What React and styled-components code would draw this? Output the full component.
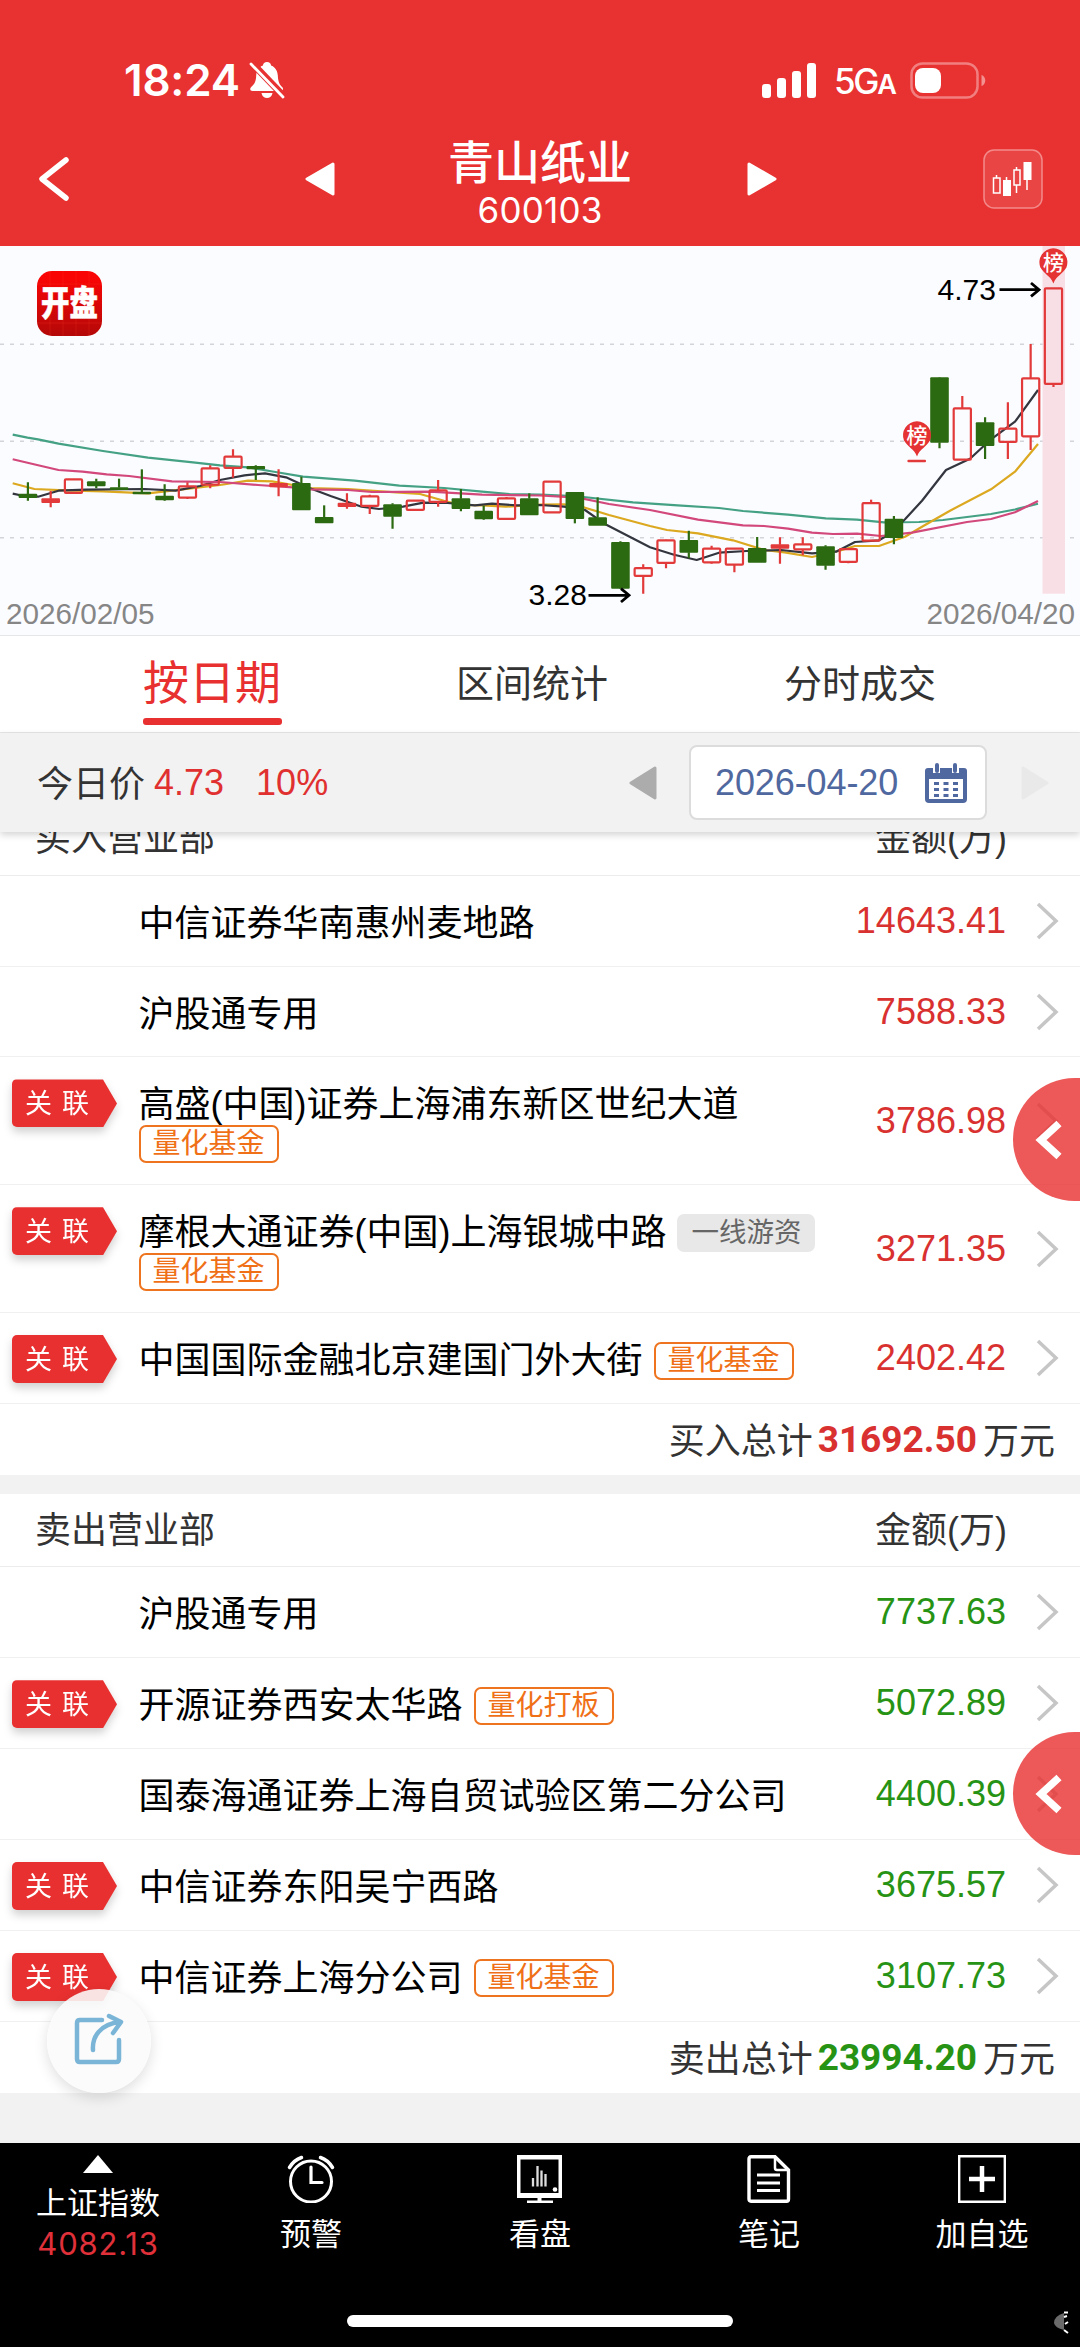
import React from "react";
import styled, { createGlobalStyle } from "styled-components";

const GlobalStyle = createGlobalStyle`
  * {
    box-sizing: border-box;
  }

  body {
    margin: 0;
    background: #f2f2f2;
    font-family: "Liberation Sans", "Noto Sans CJK SC", sans-serif;
  }

  button {
    padding: 0;
    border: 0;
    background: none;
    color: inherit;
    font: inherit;
  }

  svg {
    display: block;
  }
`;

const Page = styled.div`
  position: relative;
  display: flex;
  flex-direction: column;
  width: 1080px;
  height: 2347px;
  overflow: hidden;
  background: #f2f2f2;
`;

const Header = styled.header`
  height: 246px;
  flex: none;
  background: #e83131;
  color: #fff;
`;

const StatusBar = styled.div`
  display: flex;
  align-items: center;
  height: 136px;
  padding: 24px 94px 0 124px;
`;

const Clock = styled.span`
  width: 125px;
  font: 600 44px/1 Inter, sans-serif;
  letter-spacing: -0.2px;
  white-space: nowrap;
`;

const StatusRight = styled.div`
  display: flex;
  align-items: center;
  margin-left: auto;
`;

const Network = styled.span`
  width: 76px;
  padding: 2px 0 0 17px;
  font: 500 35px/1 Inter, sans-serif;
  letter-spacing: -2.3px;
  box-sizing: content-box;

  small {
    font-size: 27px;
    font-weight: 600;
  }
`;

const NavBar = styled.div`
  display: grid;
  grid-template-columns: 250px 1fr 250px;
  align-items: center;
  height: 86px;
`;

const NavSide = styled.div`
  display: flex;
  align-items: center;
  justify-content: space-between;
  padding: ${(props) => (props.$right ? "0 0 0 7px" : "0 0 0 36px")};
  width: ${(props) => (props.$right ? "303px" : "335px")};
  margin-bottom: 15px;
  ${(props) => props.$right && "margin-left: -90px;"}
`;

const StockTitle = styled.div`
  display: flex;
  flex-direction: column;
  align-items: center;
  margin-bottom: 8px;
`;

const StockName = styled.h1`
  margin: 0;
  font: 500 46px/55px "Liberation Sans", "Noto Sans CJK SC", sans-serif;
`;

const StockCode = styled.span`
  margin-top: 1px;
  font: 400 35px/36px Inter, sans-serif;
  letter-spacing: 0.2px;
`;

const ChartPanel = styled.section`
  height: 390px;
  flex: none;
  background: #fbfcff;
  border-bottom: 1px solid #e4e6e8;
`;

const Tabs = styled.nav`
  display: grid;
  grid-template-columns: 424px 216px 440px;
  height: 97px;
  flex: none;
  background: #fff;
  border-bottom: 1px solid #e6e6e6;
`;

const Tab = styled.button`
  display: flex;
  flex-direction: column;
  align-items: center;
  padding-top: ${(props) => (props.$active ? "12px" : "11px")};
  color: ${(props) => (props.$active ? "#e83030" : "#333")};
  font-size: ${(props) => (props.$active ? "46px" : "38px")};
  line-height: ${(props) => (props.$active ? "70px" : "74px")};
  white-space: nowrap;

  &::after {
    content: "";
    display: ${(props) => (props.$active ? "block" : "none")};
    width: 139px;
    height: 7px;
    border-radius: 3px;
    background: #e83030;
  }
`;

const PriceBar = styled.div`
  position: relative;
  z-index: 1;
  display: flex;
  align-items: center;
  height: 99px;
  padding: 0 31px 0 37px;
  flex: none;
  background: #f2f2f2;
  box-shadow: 0 3px 7px rgba(0, 0, 0, 0.17);
  font-size: 36px;
  color: #333;
`;

const PriceLabel = styled.span`
  padding-bottom: 3px;
`;

const Price = styled.span`
  margin-left: ${(props) => props.$gap}px;
  color: #e03030;
`;

const DatePicker = styled.div`
  display: flex;
  align-items: center;
  margin-left: auto;
`;

const DateBox = styled.button`
  display: flex;
  align-items: center;
  justify-content: space-between;
  width: 298px;
  height: 75px;
  margin: 0 34px 0 32px;
  padding: 0 18px 0 24px;
  border: 2px solid #dcdcdc;
  border-radius: 8px;
  background: #fff;
  color: #5068a0;
  letter-spacing: -0.1px;
`;

const Board = styled.section`
  flex: none;
  margin-top: ${(props) => props.$offset}px;
  background: #fff;
`;

const BoardHead = styled.div`
  display: flex;
  align-items: center;
  justify-content: space-between;
  height: 73px;
  padding: 0 73px 7px 35px;
  border-bottom: 1px solid #ececec;
  color: #333;
  font-size: 36px;
`;

const SeatRow = styled.div`
  display: flex;
  height: ${(props) => (props.$tall ? 127.8 : 90.9)}px;
  padding-left: 12px;
  border-bottom: 1px solid #f0f0f0;
`;

const LinkSlot = styled.div`
  width: 126.5px;
  padding-top: 22px;
  flex: none;
`;

const LinkBadge = styled.div`
  width: 105px;
  filter: drop-shadow(0 5px 4px rgba(0, 0, 0, 0.18));

  span {
    display: block;
    height: 48px;
    padding-left: 13px;
    border-radius: 5px;
    background: #e83030;
    clip-path: polygon(0 0, 91px 0, 105px 50%, 91px 100%, 0 100%);
    color: #fff;
    font-size: 27px;
    line-height: 50px;
    letter-spacing: 10px;
    white-space: nowrap;
  }
`;

const Seat = styled.div`
  display: flex;
  flex-wrap: wrap;
  align-content: flex-start;
  align-items: center;
  flex: 1;
  padding-top: 26px;
  color: #000;
  font-size: 36px;
  line-height: 43px;
  white-space: nowrap;
`;

const Tag = styled.span`
  height: 38px;
  margin-left: ${(props) => (props.$newLine ? 0 : 11)}px;
  margin-top: ${(props) => (props.$newLine ? -1 : 0)}px;
  padding: 0 12px;
  border: 2px solid ${(props) => (props.$grey ? "#e8e8e8" : "#ee7420")};
  border-radius: 7px;
  background: ${(props) => (props.$grey ? "#e8e8e8" : "#fff")};
  color: ${(props) => (props.$grey ? "#666" : "#f07018")};
  font-size: ${(props) => (props.$grey ? 27.5 : 28)}px;
  line-height: 34px;
`;

const LineBreak = styled.i`
  width: 100%;
`;

const Amount = styled.span`
  align-self: center;
  width: 160px;
  color: ${(props) => props.$color};
  font-size: 36px;
  text-align: right;
`;

const Arrow = styled.span`
  align-self: center;
  width: 74px;
  padding-left: 30px;
`;

const Total = styled.div`
  display: flex;
  align-items: center;
  justify-content: flex-end;
  height: 71px;
  padding: 0 25px 2px 0;
  color: #333;
  font-size: 36px;

  b {
    margin: 3px 6px 0 5px;
    color: ${(props) => props.$color};
    font: 700 37px/1 Roboto, sans-serif;
  }
`;

const BottomBar = styled.footer`
  position: relative;
  display: flex;
  flex-direction: column;
  align-items: center;
  justify-content: space-between;
  height: 204px;
  margin-top: auto;
  padding-bottom: 20px;
  flex: none;
  background: #000;
  color: #fff;
`;

const BottomItems = styled.div`
  display: grid;
  grid-template-columns: 196px 230px 228px 230px 196px;
  width: 100%;
`;

const BottomItem = styled.button`
  display: flex;
  flex-direction: column;
  align-items: center;
  padding-top: 12px;
  font-size: 31px;
  line-height: 40px;
  white-space: nowrap;

  span {
    margin-top: 12px;
  }
`;

const IndexName = styled.div`
  margin-top: 11px;
`;

const IndexValue = styled.div`
  color: #e0303a;
  font: 400 31px/40px Inter, sans-serif;
  letter-spacing: 0.8px;
`;

const HomeIndicator = styled.div`
  width: 386px;
  height: 12px;
  border-radius: 6px;
  background: #fff;
`;

const CornerMark = styled.div`
  position: absolute;
  right: 10px;
  bottom: 12px;
`;

const SideHandle = styled.button`
  position: absolute;
  z-index: 2;
  right: 0;
  top: ${(props) => props.$top}px;
  display: flex;
  align-items: center;
  width: 67px;
  height: 123px;
  padding-left: 22px;
  border-radius: 62px 0 0 62px;
  background: rgba(232, 48, 48, 0.8);
`;

const ShareButton = styled.button`
  position: absolute;
  z-index: 2;
  left: 47px;
  top: 1989px;
  display: flex;
  align-items: center;
  justify-content: center;
  width: 104px;
  height: 104px;
  padding-bottom: 4px;
  border-radius: 50%;
  background: rgba(251, 251, 251, 0.88);
  box-shadow: 0 5px 14px rgba(0, 0, 0, 0.13);
`;

const RED = "#e23a3a";
const GREEN = "#2c6a12";

// [direction, high, body top, body bottom, low] in thirds of a pixel
const candles = [
  ["g", 727, 762, 773, 782],
  ["d", 753, 776, 788, 802],
  ["r", 718, 719, 758, 762],
  ["g", 716, 725, 738, 745],
  ["g", 716, 743, 749, 749],
  ["g", 688, 756, 762, 762],
  ["g", 733, 768, 780, 782],
  ["r", 727, 740, 772, 777],
  ["r", 676, 686, 733, 745],
  ["r", 628, 651, 683, 713],
  ["g", 676, 679, 687, 720],
  ["d", 688, 730, 741, 769],
  ["g", 710, 730, 810, 810],
  ["g", 796, 832, 849, 849],
  ["d", 760, 789, 800, 806],
  ["r", 764, 770, 797, 822],
  ["g", 790, 794, 829, 866],
  ["r", 780, 783, 809, 811],
  ["r", 720, 752, 785, 800],
  ["g", 747, 776, 806, 814],
  ["g", 797, 813, 837, 839],
  ["r", 771, 776, 836, 838],
  ["g", 760, 776, 825, 825],
  ["r", 725, 726, 816, 818],
  ["g", 757, 757, 836, 850],
  ["g", 772, 833, 856, 856],
  ["g", 904, 907, 1045, 1047],
  ["r", 973, 985, 1007, 1061],
  ["r", 899, 902, 968, 985],
  ["g", 872, 901, 937, 955],
  ["r", 917, 927, 966, 971],
  ["r", 925, 927, 973, 997],
  ["g", 891, 925, 967, 967],
  ["d", 892, 914, 925, 971],
  ["r", 892, 914, 927, 946],
  ["g", 916, 920, 976, 989],
  ["r", 925, 928, 965, 970],
  ["r", 779, 790, 901, 901],
  ["g", 828, 837, 893, 913],
  ["d", 660, 660, 666, 666],
  ["g", 412, 413, 607, 625],
  ["r", 468, 506, 658, 658],
  ["g", 532, 548, 617, 657],
  ["r", 487, 567, 605, 657],
  ["r", 312, 416, 588, 630],
  ["r", 146, 146, 431, 441],
];

const averages = [
  {
    color: "#45a184",
    points:
      "12.7,188.7 27.5,191.7 38,193.3 58.5,197.7 103,205 148,211.7 193,216.3 220,219.3 248,221.3 275.5,226 303,230.7 354.7,234.7 399.4,239.7 444,242 482,245.7 509.6,248 540,248.5 574,250 633,256.3 677.7,259.3 719,262 743,265 788,268.7 825.8,272.3 856.8,273.7 884,276.3 919,276 943,274 991,268 1015,263.5 1038,257.7",
  },
  {
    color: "#dba820",
    points:
      "12.7,237.3 34.4,243 65.4,244.3 103,245.3 148,247.3 182.5,243.3 220,239 248,234.7 272,235.3 310,242 348,243 396,246.3 420,248 444,254.7 461,259 482,259.3 506,260.7 540,258.5 564,258.3 585,261.7 609,269 650,280 667,284 698,287.3 733,294.3 764,304 784.5,306.3 812,311 839.6,304.7 855,300 879,300 905,290.7 922,280.7 950,264.7 991,243.3 1015,225.7 1038,198",
  },
  {
    color: "#33363f",
    points:
      "12.7,247.7 24,250 38,250.7 58.5,244.7 86,243.7 144.6,243 175.6,244.7 200,240 220,234 244.5,229.3 265,227.3 286,231.3 310,242.3 330.6,250 361.6,260.7 379,263 403,260.7 423.5,256.7 447.7,257 475,259.3 492,257.7 516.5,259.3 540,259 564,260.7 585,264 605.4,278.3 650,301.3 674,308.7 696.7,314 719,306.7 746.6,305 781,304 812,307.3 836,305.7 855,296 879,294.3 891,287.3 905,273.3 922,254.7 946,224 970,212.7 991,193.3 1015,175.7 1038,144",
  },
  {
    color: "#d2487a",
    points:
      "12.7,213.3 36,218.7 58.5,224 82.6,225.7 106.7,228.3 129,230 172,235.3 220,236 258,239 293,241.3 310,243.3 348,244 372,246 430,245.7 482,248.7 540,249.5 578,251.7 609,258 650,264 698,273.7 743,279.3 764,280 788,282.7 812,286.7 833,288 857,287.7 881,290 912,286.7 967,276 991,273 1015,266.3 1038,255",
  },
];

const buySeats = [
  { name: "中信证券华南惠州麦地路", amount: "14643.41" },
  { name: "沪股通专用", amount: "7588.33" },
  {
    name: "高盛(中国)证券上海浦东新区世纪大道",
    amount: "3786.98",
    linked: true,
    below: "量化基金",
  },
  {
    name: "摩根大通证券(中国)上海银城中路",
    amount: "3271.35",
    linked: true,
    trader: "一线游资",
    below: "量化基金",
  },
  {
    name: "中国国际金融北京建国门外大街",
    amount: "2402.42",
    linked: true,
    tag: "量化基金",
  },
];

const sellSeats = [
  { name: "沪股通专用", amount: "7737.63" },
  { name: "开源证券西安太华路", amount: "5072.89", linked: true, tag: "量化打板" },
  { name: "国泰海通证券上海自贸试验区第二分公司", amount: "4400.39" },
  { name: "中信证券东阳吴宁西路", amount: "3675.57", linked: true },
  { name: "中信证券上海分公司", amount: "3107.73", linked: true, tag: "量化基金" },
];

function Candle({ data, index }) {
  const [type, high, top, bottom, low] = data;
  const x = 27.9 + index * 22.79;
  const y = (v) => v / 3 - 6;
  const color = type === "g" ? GREEN : RED;
  const filled = type !== "r";
  const inset = filled ? 0 : 0.7;

  return (
    <g>
      <path
        d={`M${x} ${y(high)}V${y(top)}M${x} ${y(bottom)}V${y(low)}`}
        stroke={color}
        strokeWidth="2.2"
      />
      <rect
        x={x - 9.3 + inset}
        y={y(top) - 0.3}
        width={18.6 - inset * 2}
        height={Math.max(y(bottom) - y(top), 1.5) + 0.6}
        rx="1"
        fill={filled ? color : "none"}
        stroke={filled ? "none" : color}
        strokeWidth="2.2"
      />
    </g>
  );
}

function Pin({ x, y }) {
  return (
    <g>
      <path
        d={`M${x - 13} ${y + 5}A14 14 0 1 1 ${x + 13} ${y + 5}C${x + 9} ${y + 12} ${x + 3} ${y + 13} ${x} ${y + 21}C${x - 3} ${y + 13} ${x - 9} ${y + 12} ${x - 13} ${y + 5}Z`}
        fill="#e53232"
      />
      <text
        x={x}
        y={y + 7.5}
        fill="#fff"
        fontSize="21"
        fontWeight="500"
        textAnchor="middle"
      >
        榜
      </text>
    </g>
  );
}

function KLineChart() {
  return (
    <svg width="1080" height="389" viewBox="0 0 1080 389" fill="none">
      <defs>
        <linearGradient id="logo" x1="0" y1="0" x2="0" y2="1">
          <stop offset="0.1" stopColor="#fa0505" />
          <stop offset="1" stopColor="#b40808" />
        </linearGradient>
      </defs>
      <path
        d="M0 98.3H1080M0 195.3H1080M0 291.7H1080"
        stroke="#d3d4da"
        strokeWidth="1.5"
        strokeDasharray="4 6"
      />
      <rect x="1042.5" y="0" width="22.5" height="347.7" fill="#f8dfe5" />

      <rect x="37" y="25" width="65" height="65" rx="15" fill="url(#logo)" />
      <path
        d="M37 77H102M37 38H102M50 25V90M63 25V90M76 25V90M89 25V90"
        stroke="#ff5030"
        strokeOpacity="0.18"
      />
      <text
        transform="translate(69.5 70.3) scale(1 1.22)"
        fill="#fff"
        fontSize="28.5"
        fontWeight="900"
        stroke="#fff"
        strokeWidth="0.4"
        textAnchor="middle"
        fontFamily="Noto Sans CJK SC"
      >
        开盘
      </text>

      {averages.map((line) => (
        <polyline
          key={line.color}
          points={line.points}
          stroke={line.color}
          strokeWidth="2.2"
          strokeLinejoin="round"
        />
      ))}
      {candles.map((data, i) => (
        <Candle key={i} data={data} index={i} />
      ))}
      <Pin x={917} y={189.5} />
      <Pin x={1053.4} y={16.5} />

      <g fill="#000" fontSize="30">
        <text x="937.5" y="53.5">4.73</text>
        <text x="528.5" y="359">3.28</text>
      </g>
      <g stroke="#000" strokeWidth="2.8">
        <path d="M999.5 43.7H1038M1031 37L1039 43.7L1031 50.4" />
        <path d="M588.5 349.3H628M621 342.6L629 349.3L621 356" />
      </g>
      <g fill="#868686" fontSize="29.7">
        <text x="6" y="378">2026/02/05</text>
        <text x="1075" y="378" textAnchor="end">2026/04/20</text>
      </g>
    </svg>
  );
}

function MutedBell() {
  return (
    <svg width="36" height="38" viewBox="0 0 36 38" fill="#fff">
      <path d="M18 1c2.3 0 4 1.5 4 3.5 4 1.3 6.5 5.2 6.8 10 .3 6.5 2 9.5 4.4 11.5 1.5 1.4 1 4-1.4 4H3.6C1 30 .5 27.5 2.2 26c3-2.7 4.8-5 5-11.5.2-4.8 2.8-8.7 6.8-10C14 2.5 15.7 1 18 1Z" />
      <path d="M12.5 32h11c-.6 3.3-2.7 5-5.5 5s-4.9-1.7-5.5-5Z" />
      <path d="M2 1L36 36.5" stroke="#e83131" strokeWidth="7" />
      <path d="M2 3L34 36" stroke="#fff" strokeWidth="2.8" strokeLinecap="round" />
    </svg>
  );
}

function Signal() {
  return (
    <svg width="55" height="35" viewBox="0 0 55 35" fill="#fff">
      <rect x="0" y="21" width="9" height="14" rx="3" />
      <rect x="15" y="15" width="9" height="20" rx="3" />
      <rect x="30" y="8" width="9" height="27" rx="3" />
      <rect x="45" y="0" width="9" height="35" rx="3" />
    </svg>
  );
}

function Battery() {
  return (
    <svg width="76" height="37" viewBox="0 0 76 37" fill="none">
      <rect
        x="1.5"
        y="1.5"
        width="66"
        height="34"
        rx="11"
        stroke="#f27f7f"
        strokeWidth="2.5"
      />
      <rect x="5" y="6" width="26" height="25" rx="8" fill="#fff" />
      <path d="M71.5 13c5 1.5 5 9.5 0 11Z" fill="#f39090" />
    </svg>
  );
}

function Triangle({ width, height, color, right }) {
  const d = right
    ? `M2 2L${width - 2} ${height / 2}L2 ${height - 2}Z`
    : `M${width - 2} 2L2 ${height / 2}L${width - 2} ${height - 2}Z`;
  return (
    <svg width={width} height={height}>
      <path d={d} fill={color} stroke={color} strokeWidth="3" strokeLinejoin="round" />
    </svg>
  );
}

function CandleButton() {
  return (
    <svg width="60" height="60" viewBox="0 0 60 60" fill="none" stroke="#fff">
      <rect
        x="1"
        y="1"
        width="58"
        height="58"
        rx="10"
        fill="#ea4545"
        stroke="#f38a8a"
        strokeWidth="1.5"
      />
      <g strokeWidth="1.5">
        <path d="M13.5 26V29M33.5 18V21M33.5 36V44M23.5 28V32M44 31V41" />
        <rect x="10.5" y="29" width="6.5" height="15" />
        <rect x="31" y="21" width="6" height="15" />
      </g>
      <path d="M20 31H28V47H20ZM40.5 13H48.5V31H40.5Z" fill="#fff" stroke="none" />
    </svg>
  );
}

function CalendarIcon() {
  return (
    <svg width="42" height="40" viewBox="0 0 42 40" fill="#5068a0">
      <path d="M3 5H39Q42 5 42 8V36Q42 40 38 40H4Q0 40 0 36V8Q0 5 3 5Z" />
      <path d="M4 16H38V36H4Z" fill="#fff" />
      <path d="M8 3H15V10H8ZM27 3H34V10H27Z" fill="#fff" />
      <rect x="10" y="0" width="4" height="10" rx="2" />
      <rect x="28" y="0" width="4" height="10" rx="2" />
      <path d="M9 19h5v3h-5zM18.5 19h5v3h-5zM28 19h5v3h-5zM9 25h5v3h-5zM18.5 25h5v3h-5zM28 25h5v3h-5zM9 31h5v3h-5zM18.5 31h5v3h-5zM28 31h5v3h-5z" />
    </svg>
  );
}

function Chevron() {
  return (
    <svg width="24" height="40" viewBox="0 0 24 40" fill="none">
      <path d="M2 3L20 20L2 37" stroke="#c6c6c6" strokeWidth="3.5" />
    </svg>
  );
}

function AlarmIcon() {
  return (
    <svg width="48" height="48" viewBox="0 0 48 48" fill="none" stroke="#fff">
      <circle cx="24" cy="26.5" r="20.5" strokeWidth="3" />
      <path d="M24 12V27.5H35" strokeWidth="3.2" strokeLinecap="round" />
      <path
        d="M2.5 12.5Q7 5 14.5 2.5M45.5 12.5Q41 5 33.5 2.5"
        strokeWidth="3.5"
        strokeLinecap="round"
      />
    </svg>
  );
}

function MonitorIcon() {
  return (
    <svg width="48" height="48" viewBox="0 0 48 48" fill="#fff">
      <path fillRule="evenodd" d="M1 0H46V43H1ZM4.5 4.5V38H42.5V4.5Z" />
      <path d="M21.5 42H25.5V46H21.5ZM11 45.5H37V48H11Z" />
      <path
        d="M17 23V31.5M21.5 11V31.5M25.5 15.5V31.5M29.5 19V31.5"
        stroke="#ddd"
        strokeWidth="2.3"
      />
      <circle cx="39" cy="34.5" r="2.3" />
    </svg>
  );
}

function NoteIcon() {
  return (
    <svg width="44" height="48" viewBox="0 0 44 48" fill="none" stroke="#fff">
      <path
        d="M4 1.7H28L41.5 15V44Q41.5 46.3 39.5 46.3H4Q2 46.3 2 44V4Q2 1.7 4 1.7Z"
        strokeWidth="3.4"
      />
      <path d="M28 2V13Q28 15 30 15H41" strokeWidth="2.5" />
      <path d="M10 20H33M10 28H33M10 35.5H33" strokeWidth="2.8" />
    </svg>
  );
}

function AddIcon() {
  return (
    <svg width="48" height="48" viewBox="0 0 48 48" fill="none" stroke="#fff">
      <path d="M1.2 1.2H46.8V46.8H1.2Z" strokeWidth="2.4" />
      <path d="M24 11V37M11 24H37" strokeWidth="4.5" />
    </svg>
  );
}

function ShareIcon() {
  return (
    <svg
      width="50"
      height="52"
      viewBox="0 0 50 52"
      fill="none"
      stroke="#7ab4d6"
      strokeWidth="4.5"
      strokeLinecap="round"
      strokeLinejoin="round"
    >
      <path d="M28 7H6Q3 7 3 10V46Q3 49 6 49H42Q45 49 45 46V27" />
      <path d="M19 37C18 24 26 11 46 9M35 3L47 9L39 20" />
    </svg>
  );
}

function SeatItem({ seat, color }) {
  return (
    <SeatRow $tall={Boolean(seat.below)}>
      <LinkSlot>
        {seat.linked && (
          <LinkBadge>
            <span>关联</span>
          </LinkBadge>
        )}
      </LinkSlot>
      <Seat>
        {seat.name}
        {seat.trader && <Tag $grey>{seat.trader}</Tag>}
        {seat.tag && <Tag>{seat.tag}</Tag>}
        {seat.below && <LineBreak />}
        {seat.below && <Tag $newLine>{seat.below}</Tag>}
      </Seat>
      <Amount $color={color}>{seat.amount}</Amount>
      <Arrow>
        <Chevron />
      </Arrow>
    </SeatRow>
  );
}

function SeatBoard({ title, totalLabel, total, seats, color, offset }) {
  return (
    <Board $offset={offset}>
      <BoardHead>
        <span>{title}</span>
        <span>金额(万)</span>
      </BoardHead>
      {seats.map((seat) => (
        <SeatItem key={seat.name} seat={seat} color={color} />
      ))}
      <Total $color={color}>
        {totalLabel}
        <b>{total}</b>
        万元
      </Total>
    </Board>
  );
}

function HandleIcon() {
  return (
    <svg width="28" height="42" viewBox="0 0 28 42" fill="none">
      <path d="M24 4.5L6 21L24 37.5" stroke="#fff" strokeWidth="7.5" />
    </svg>
  );
}

export default function App() {
  return (
    <Page>
      <GlobalStyle />
      <Header>
        <StatusBar>
          <Clock>18:24</Clock>
          <MutedBell />
          <StatusRight>
            <Signal />
            <Network>
              5G<small>A</small>
            </Network>
            <Battery />
          </StatusRight>
        </StatusBar>
        <NavBar>
          <NavSide>
            <svg width="36" height="46" viewBox="0 0 36 46" fill="none">
              <path
                d="M30 4L6 23L30 42"
                stroke="#fff"
                strokeWidth="5.5"
                strokeLinecap="round"
                strokeLinejoin="round"
              />
            </svg>
            <Triangle width={30} height={34} color="#fff" />
          </NavSide>
          <StockTitle>
            <StockName>青山纸业</StockName>
            <StockCode>600103</StockCode>
          </StockTitle>
          <NavSide $right>
            <Triangle width={30} height={34} color="#fff" right />
            <CandleButton />
          </NavSide>
        </NavBar>
      </Header>

      <ChartPanel>
        <KLineChart />
      </ChartPanel>

      <Tabs>
        <Tab $active>按日期</Tab>
        <Tab>区间统计</Tab>
        <Tab>分时成交</Tab>
      </Tabs>

      <PriceBar>
        <PriceLabel>今日价</PriceLabel>
        <Price $gap={9}>4.73</Price>
        <Price $gap={32}>10%</Price>
        <DatePicker>
          <Triangle width={28} height={34} color="#acacac" />
          <DateBox>
            2026-04-20
            <CalendarIcon />
          </DateBox>
          <Triangle width={28} height={34} color="#e9e9e9" right />
        </DatePicker>
      </PriceBar>

      <SeatBoard
        title="买入营业部"
        totalLabel="买入总计"
        total="31692.50"
        seats={buySeats}
        color="#d93030"
        offset={-29.3}
      />
      <SeatBoard
        title="卖出营业部"
        totalLabel="卖出总计"
        total="23994.20"
        seats={sellSeats}
        color="#269314"
        offset={19.4}
      />

      <BottomBar>
        <BottomItems>
          <BottomItem>
            <svg width="32" height="18" viewBox="0 0 32 18">
              <path d="M16 0L31 18H1Z" fill="#fff" />
            </svg>
            <IndexName>上证指数</IndexName>
            <IndexValue>4082.13</IndexValue>
          </BottomItem>
          <BottomItem>
            <AlarmIcon />
            <span>预警</span>
          </BottomItem>
          <BottomItem>
            <MonitorIcon />
            <span>看盘</span>
          </BottomItem>
          <BottomItem>
            <NoteIcon />
            <span>笔记</span>
          </BottomItem>
          <BottomItem>
            <AddIcon />
            <span>加自选</span>
          </BottomItem>
        </BottomItems>
        <HomeIndicator />
        <CornerMark>
          <svg width="16" height="24" viewBox="0 0 16 24" fill="none">
            <path d="M10 2Q0 5 0 12Q1 17 10 19Z" fill="#6a6a6a" />
            <path
              d="M10 1.5H14M10 6L13 5M11 13L14 11M10 19L14 22"
              stroke="#fff"
              strokeWidth="2"
            />
          </svg>
        </CornerMark>
      </BottomBar>

      <SideHandle $top={1078}>
        <HandleIcon />
      </SideHandle>
      <SideHandle $top={1732}>
        <HandleIcon />
      </SideHandle>
      <ShareButton>
        <ShareIcon />
      </ShareButton>
    </Page>
  );
}
